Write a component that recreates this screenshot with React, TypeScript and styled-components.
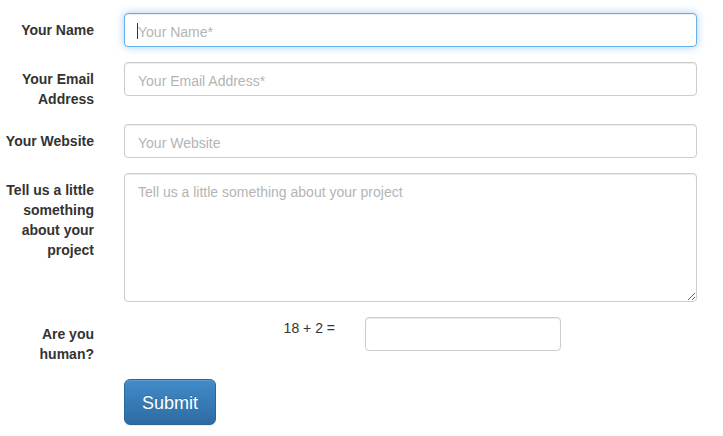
import React from "react";
import styled, { createGlobalStyle, css } from "styled-components";

const GlobalStyle = createGlobalStyle`
  html, body { margin: 0; padding: 0; background: #fff; }
  body {
    font-family: "Liberation Sans", Arial, sans-serif;
    font-size: 14px;
    line-height: 20px;
    color: #333;
  }
  * { box-sizing: border-box; }
`;

const Form = styled.form`
  width: 712px;
  padding-top: 13px;
`;

const Group = styled.div`
  display: grid;
  grid-template-columns: 109px 1fr;
  margin-bottom: 15px;
`;

const Label = styled.label`
  padding: 7px 15px 0 0;
  text-align: right;
  font-weight: bold;
  font-size: 14px;
  line-height: 20px;
  color: #333;
`;

const Control = styled.div`
  padding: 0 15px;
  position: relative;
`;

const fieldBase = css`
  display: block;
  width: 100%;
  padding: 8px 12px 4px 13px;
  font-family: "Liberation Sans", Arial, sans-serif;
  font-size: 14px;
  line-height: 20px;
  color: #555;
  background: #fff;
  border: 1px solid #ccc;
  border-radius: 4px;
  box-shadow: inset 0 1px 1px rgba(0, 0, 0, 0.075);
  outline: none;
  &::placeholder { color: #b4b4b4; }
`;

const Input = styled.input<{ $focused?: boolean }>`
  ${fieldBase};
  height: 34px;
  ${(p) =>
    p.$focused &&
    css`
      border-color: #66afe9;
      box-shadow: inset 0 1px 1px rgba(0, 0, 0, 0.075),
        0 0 8px rgba(102, 175, 233, 0.6);
    `}
`;

const TextArea = styled.textarea`
  ${fieldBase};
  height: 129px;
  resize: vertical;
`;

const Caret = styled.span`
  position: absolute;
  left: 28px;
  top: 10px;
  width: 1px;
  height: 16px;
  background: #333;
`;

const CaptchaRow = styled.div`
  display: flex;
  align-items: flex-start;
`;

const Question = styled.div`
  width: 226px;
  padding: 1px 15px 0 0;
  text-align: right;
  font-size: 14px;
  line-height: 20px;
  color: #333;
`;

const CaptchaInput = styled.input`
  ${fieldBase};
  width: 196px;
  height: 34px;
  margin-left: 15px;
`;

const SubmitButton = styled.button`
  padding: 11px 17px 9px;
  font-family: "Liberation Sans", Arial, sans-serif;
  font-size: 18px;
  line-height: 24px;
  color: #fff;
  border: 1px solid #2b669a;
  border-radius: 6px;
  background: linear-gradient(to bottom, #428bca 0%, #2d6ca2 100%);
  box-shadow: inset 0 1px 0 rgba(255, 255, 255, 0.15),
    0 1px 1px rgba(0, 0, 0, 0.075);
  text-shadow: 0 -1px 0 rgba(0, 0, 0, 0.2);
  cursor: pointer;
`;

export default function App() {
  return (
    <>
      <GlobalStyle />
      <Form onSubmit={(e) => e.preventDefault()}>
        <Group>
          <Label>Your Name</Label>
          <Control>
            <Input $focused placeholder="Your Name*" />
            <Caret />
          </Control>
        </Group>
        <Group>
          <Label>
            Your Email
            <br />
            Address
          </Label>
          <Control>
            <Input placeholder="Your Email Address*" />
          </Control>
        </Group>
        <Group>
          <Label>Your Website</Label>
          <Control>
            <Input placeholder="Your Website" />
          </Control>
        </Group>
        <Group>
          <Label>
            Tell us a little
            <br />
            something
            <br />
            about your
            <br />
            project
          </Label>
          <Control>
            <TextArea placeholder="Tell us a little something about your project" />
          </Control>
        </Group>
        <Group>
          <Label>
            Are you
            <br />
            human?
          </Label>
          <Control>
            <CaptchaRow>
              <Question>18 + 2 =</Question>
              <CaptchaInput />
            </CaptchaRow>
          </Control>
        </Group>
        <Group>
          <span />
          <Control>
            <SubmitButton type="submit">Submit</SubmitButton>
          </Control>
        </Group>
      </Form>
    </>
  );
}
